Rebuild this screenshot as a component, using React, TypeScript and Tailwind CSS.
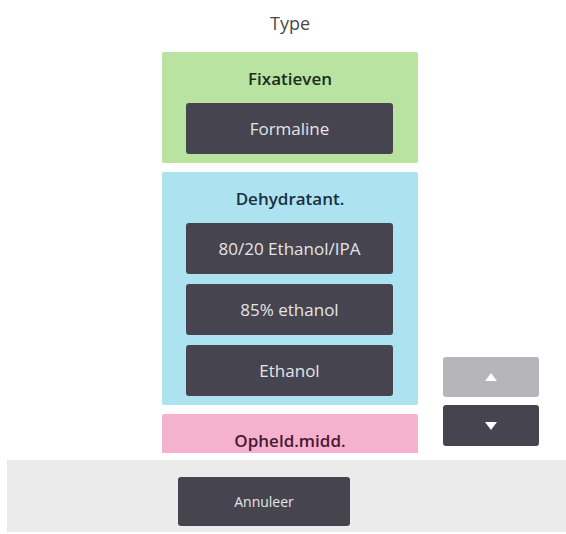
const groups = [
  {
    title: "Fixatieven",
    panel: "bg-[#b9e3a1]",
    text: "text-[#1c2b1c]",
    items: ["Formaline"],
  },
  {
    title: "Dehydratant.",
    panel: "bg-[#ade2f0]",
    text: "text-[#1b2f3e]",
    items: ["80/20 Ethanol/IPA", "85% ethanol", "Ethanol"],
  },
  {
    title: "Opheld.midd.",
    panel: "bg-[#f5b2cf]",
    text: "text-[#4a1830]",
    items: [],
  },
];

const App = () => {
  return (
    <div className="w-[566px] h-[534px] bg-white flex flex-col font-['Open_Sans',sans-serif]">
      <div className="flex h-[460px]">
        <div className="w-[162px] shrink-0" />
        <div className="w-[256px] flex flex-col">
          <div className="h-[52px] flex items-center justify-center pb-[5px] text-[18px] text-[#4a4a4a]">
            Type
          </div>
          <div className="h-[401px] overflow-hidden flex flex-col gap-[9px]">
            {groups.map((g, gi) => (
              <div key={gi} className={`${g.panel} rounded-[2px] pb-[9px] shrink-0 ${g.items.length ? "" : "h-[60px]"}`}>
                <div className={`h-[51px] flex items-center justify-center pt-[2px] text-[17px] font-semibold ${g.text}`}>
                  {g.title}
                </div>
                <div className="flex flex-col gap-[10px]">
                  {g.items.map((item, i) => (
                    <div
                      key={i}
                      className="ml-[24px] w-[207px] h-[51px] rounded-[3px] bg-[#45444f] flex items-center justify-center text-[17px] text-[#e4e4e8]"
                    >
                      {item}
                    </div>
                  ))}
                </div>
              </div>
            ))}
          </div>
        </div>
        <div className="ml-[25px] pt-[357px] flex flex-col gap-[8px]">
          <button className="w-[96px] h-[40px] rounded-[3px] bg-[#b6b6ba] flex items-center justify-center">
            <svg width="12" height="8" viewBox="0 0 12 8">
              <path d="M6 0 L12 8 L0 8 Z" fill="#ffffff" />
            </svg>
          </button>
          <button className="w-[96px] h-[41px] rounded-[3px] bg-[#45444f] flex items-center justify-center">
            <svg width="12" height="8" viewBox="0 0 12 8">
              <path d="M0 0 L12 0 L6 8 Z" fill="#ffffff" />
            </svg>
          </button>
        </div>
      </div>
      <div className="ml-[7px] h-[72px] bg-[#ebebeb] pl-[171px] pt-[17px]">
        <button className="w-[172px] h-[49px] rounded-[3px] bg-[#45444f] flex items-center justify-center text-[14px] text-[#e4e4e8]">
          Annuleer
        </button>
      </div>
    </div>
  );
};

export default App;
